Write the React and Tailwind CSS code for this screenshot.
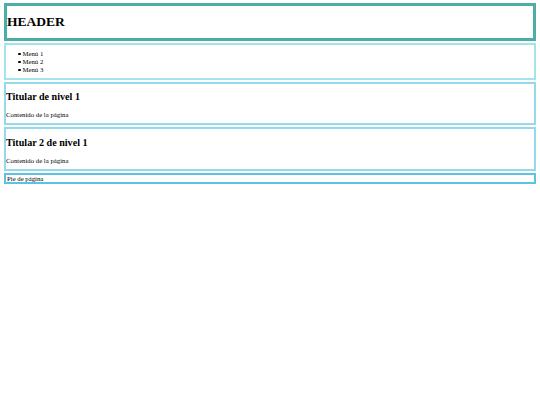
export default function App() {
  return (
    <div
      className="flex min-h-[405px] flex-col gap-[2px] bg-white px-[4px] pt-[3px] text-black"
      style={{ fontFamily: '"Liberation Serif", "Times New Roman", serif' }}
    >
      <header className="flex h-[38px] items-center border-[3px] border-[#4aaea4]">
        <h1 className="text-[13.5px] font-bold leading-none">HEADER</h1>
      </header>

      <nav className="h-[37px] border-2 border-[#a5e3ea]">
        <ul className="mt-[5px] pl-[12px] text-[6.75px] leading-[8px]">
          {["Menú 1", "Menú 2", "Menú 3"].map((item) => (
            <li key={item} className="flex items-center gap-[2px]">
              <span className="inline-block h-[2.5px] w-[2.5px] rounded-full bg-black" />
              <span>{item}</span>
            </li>
          ))}
        </ul>
      </nav>

      <section className="h-[43px] border-2 border-[#94d9ec]">
        <h2 className="mt-[7px] text-[10.1px] font-bold leading-[12px]">Titular de nivel 1</h2>
        <p className="mt-[8px] text-[6.75px] leading-[8px]">Contenido de la página</p>
      </section>

      <section className="h-[44px] border-2 border-[#94d9ec]">
        <h2 className="mt-[8px] text-[10.1px] font-bold leading-[12px]">Titular 2 de nivel 1</h2>
        <p className="mt-[8px] text-[6.75px] leading-[8px]">Contenido de la página</p>
      </section>

      <footer className="h-[11px] border-2 border-[#5bc3e2]">
        <p className="pl-[1px] text-[6.75px] leading-[7px]">Pie de página</p>
      </footer>
    </div>
  );
}
